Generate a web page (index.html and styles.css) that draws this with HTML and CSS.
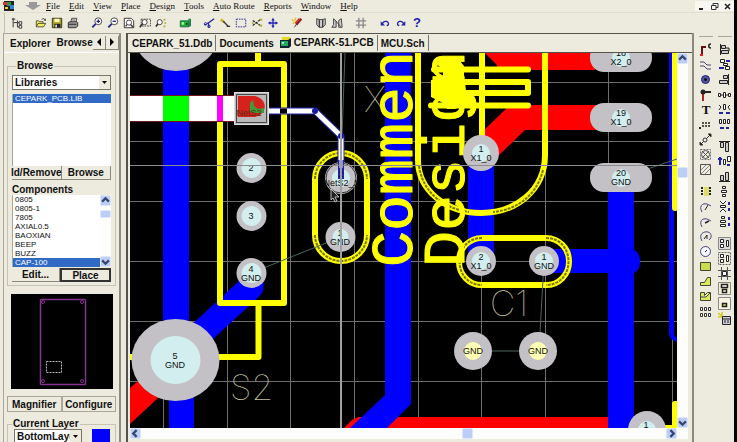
FILE: index.html
```html
<!DOCTYPE html>
<html lang="en">
<head>
    <meta charset="UTF-8">
    <meta name="viewport" content="width=device-width, initial-scale=1.0">
    <title>CEPARK-51.PCB</title>
    <link rel="stylesheet" href="styles.css">
</head>

<body>
    <div class="app">
        <header class="menu-bar">
            <svg class="app-icon" width="12" height="12" viewBox="0 0 12 12"><path fill="#222" d="M1 1h10v10H1z"/><path fill="#d33" d="M0 2h4v3H0z"/><path fill="#2a9a4a" d="M4 2h4v4H4z"/><path fill="#38c" d="M7 5h4v4H7z"/><path fill="#fc3" d="M2 7h3v2H2z"/></svg>
            <svg class="doc-icon" width="16" height="10" viewBox="0 0 16 10"><path fill="#999" d="M4 1h8v3h4L8 9 0 4h4z"/></svg>
            <nav class="menu">
                <a href="#"><u>F</u>ile</a>
                <a href="#"><u>E</u>dit</a>
                <a href="#"><u>V</u>iew</a>
                <a href="#"><u>P</u>lace</a>
                <a href="#"><u>D</u>esign</a>
                <a href="#"><u>T</u>ools</a>
                <a href="#"><u>A</u>uto Route</a>
                <a href="#"><u>R</u>eports</a>
                <a href="#"><u>W</u>indow</a>
                <a href="#"><u>H</u>elp</a>
            </nav>
            <div class="window-buttons">
                <button aria-label="Minimize"><svg width="9" height="9" viewBox="0 0 9 9"><path stroke="#222" stroke-width="2" d="M2 7h4"/></svg></button>
                <button aria-label="Restore"><svg width="9" height="9" viewBox="0 0 9 9"><path fill="none" stroke="#333" d="M3 3V1.500h5v4H6M1.500 3.500h4.500v4H1.500z"/></svg></button>
                <button aria-label="Close"><svg width="9" height="9" viewBox="0 0 9 9"><path stroke="#222" stroke-width="1.500" d="M2 2l5 5M7 2L2 7"/></svg></button>
            </div>
        </header>

        <div class="toolbar">
            <div class="tool-group">
                <button aria-label="Panel"><svg viewBox="0 0 14 14"><path fill="none" stroke="#222" d="M2.500 1v11M1 2.500h4M3 6.500h4M7.500 4v8M8 6.500h2M8 11.500h2"/><path fill="#fff" stroke="#222" d="M9.500 5.500h3v3h-3zM9.500 10h3v3h-3z"/></svg></button>
            </div>
            <div class="tool-group">
                <button aria-label="Open"><svg viewBox="0 0 14 14"><path fill="#f4ec60" stroke="#443" d="M1.500 11V4.500h3l1 1h4V7M1.500 11.500l2-4h9l-2.500 4z"/><path fill="none" stroke="#222" d="M8 3c1-2 3-1 4 1l-1-.2M12 4V2"/></svg></button>
                <button aria-label="Save"><svg viewBox="0 0 14 14"><path fill="#a8a020" stroke="#222" d="M1.500 1.500h11v11h-11z"/><path fill="#fff8b0" d="M4 2h6v4H4z"/><path fill="#222" d="M4 8h7v4H4z"/><path fill="#ddd" d="M5 9h2v3H5z"/></svg></button>
                <button aria-label="Print"><svg viewBox="0 0 14 14"><path fill="#fff" stroke="#333" d="M4.500 6l1-4.500h6L10.500 6"/><path fill="#999" stroke="#222" d="M1.500 6.500l2-1h8l1 1v4l-2 2h-9z"/><path stroke="#222" d="M2 8.500h9M6 3.500h4"/></svg></button>
            </div>
            <div class="tool-group">
                <button aria-label="Zoom in"><svg viewBox="0 0 14 14"><circle cx="8.500" cy="5" r="4" fill="#fff" stroke="#333"/><path stroke="#228" stroke-width="1.500" d="M6.500 5h4M8.500 3v4"/><path stroke="#228" stroke-width="2" d="M5.500 8L1.500 12"/></svg></button>
                <button aria-label="Zoom out"><svg viewBox="0 0 14 14"><circle cx="8.500" cy="5" r="4" fill="#fff" stroke="#333"/><path stroke="#228" stroke-width="1.500" d="M6.500 5h4"/><path stroke="#228" stroke-width="2" d="M5.500 8L1.500 12"/></svg></button>
                <button aria-label="Fit document"><svg viewBox="0 0 14 14"><path fill="#fff" stroke="#222" d="M1.500 1.500h8l3 3v8h-11z"/><circle cx="7" cy="6.500" r="3" fill="none" stroke="#333"/><path stroke="#333" stroke-width="1.500" d="M9 9l3 3M4.500 9L3 11"/></svg></button>
                <button aria-label="Zoom area"><svg viewBox="0 0 14 14"><path fill="none" stroke="#333" stroke-dasharray="2 1" d="M2.500 2.500h11v8h-11z"/><circle cx="6.500" cy="6" r="3" fill="#fff" stroke="#333"/><path stroke="#333" stroke-width="2" d="M4 8l-3 4"/></svg></button>
                <button aria-label="Zoom point"><svg viewBox="0 0 14 14"><circle cx="5.500" cy="6" r="3" fill="#fff" stroke="#333"/><path stroke="#333" stroke-width="2" d="M3.500 8L1 11"/><path fill="#aa2" d="M10 2h2v2h-2zM11 6h2v2h-2zM10 10h2v2h-2z"/></svg></button>
            </div>
            <div class="tool-group">
                <button aria-label="Board"><svg viewBox="0 0 14 14"><path fill="#22a83c" stroke="#164" d="M1.500 4.500h10v7h-10zM11 2.500h2.500v8H11"/><path fill="#9f8" d="M3 6h3v3H3z"/><path fill="#222" d="M8 7h2v2H8z"/></svg></button>
            </div>
            <div class="tool-group">
                <button aria-label="Cut"><svg viewBox="0 0 14 14"><path fill="none" stroke="#229" stroke-width="1.500" d="M13 2L5 8M7 12l-1-6M4 8.500L1.500 9"/><circle cx="3" cy="8" r="1.500" fill="none" stroke="#229"/><circle cx="7" cy="11" r="1.500" fill="none" stroke="#229"/></svg></button>
                <button aria-label="Paste"><svg viewBox="0 0 14 14"><path stroke="#c8b820" stroke-width="3" d="M2 3l4 3"/><path stroke="#333" stroke-width="1.500" d="M5 5l6 6M9 11h4"/></svg></button>
                <button aria-label="Select area"><svg viewBox="0 0 14 14"><path fill="none" stroke="#229" stroke-dasharray="2 1" d="M1.500 2.500h11v9h-11z"/></svg></button>
                <button aria-label="Deselect"><svg viewBox="0 0 14 14"><path fill="none" stroke="#333" stroke-width="1.500" stroke-dasharray="3 1" d="M2 4l9 6M2 10l9-7"/><path fill="#aa2" d="M10 2h3v2h-3zM10 9h3v2h-3zM1 6h2v2H1z"/></svg></button>
                <button aria-label="Move"><svg viewBox="0 0 14 14"><path stroke="#22b" stroke-width="1.500" d="M7 3v8M3 7h8"/><path fill="#22b" d="M7 1l2 3H5zM7 13l2-3H5zM1 7l3-2v4zM13 7l-3-2v4z"/></svg></button>
            </div>
            <div class="tool-group">
                <button aria-label="Wizard"><svg viewBox="0 0 14 14"><path stroke="#822" stroke-width="3" d="M12 2L6 9"/><path stroke="#e03020" stroke-width="2" d="M10 2L5 7"/><path stroke="#e0c020" stroke-width="1.500" d="M1 3l3 2M5 1v3M2 8l2-2"/><path stroke="#333" d="M6 9l-2 3"/></svg></button>
            </div>
            <div class="tool-group">
                <button aria-label="Library"><svg viewBox="0 0 14 14"><path fill="#ccc" stroke="#333" d="M2 2l3 1v9L2 9zM12 2L9 3v9l3-3zM5 3h4v9H5z"/></svg></button>
                <button aria-label="Browse library"><svg viewBox="0 0 14 14"><path fill="#ccc" stroke="#333" d="M3 2l3 3v7H1l2-3zM12 2L9 4v8h4zM5 4l6 7"/></svg></button>
            </div>
            <div class="tool-group">
                <button aria-label="Grid"><svg viewBox="0 0 14 14"><path stroke="#888" stroke-width="1.500" d="M4.500 1v12M9.500 1v12M1 4.500h12M1 9.500h12"/></svg></button>
            </div>
            <div class="tool-group">
                <button aria-label="Undo"><svg viewBox="0 0 14 14"><path fill="none" stroke="#22a" stroke-width="1.500" d="M4 8C5 4 12 4 11 9l-2 1"/><path fill="#22a" d="M2 5v5h5z"/></svg></button>
                <button aria-label="Redo"><svg viewBox="0 0 14 14"><path fill="none" stroke="#22a" stroke-width="1.500" d="M10 8C9 4 2 4 3 9l2 1"/><path fill="#22a" d="M12 5v5H7z"/></svg></button>
                <button aria-label="Help" class="help">?</button>
            </div>
        </div>

        <main class="workspace">
            <aside class="side-panel">
                <div class="panel-tabs">
                    <button class="panel-tab">Explorer</button>
                    <button class="panel-tab active">Browse</button>
                    <div class="tab-scroll">
                        <button aria-label="Previous tab"><svg width="6" height="8" viewBox="0 0 6 8"><path d="M5 0v8L1 4z"/></svg></button>
                        <button aria-label="Next tab"><svg width="6" height="8" viewBox="0 0 6 8"><path d="M1 0v8l4-4z"/></svg></button>
                    </div>
                </div>
                <div class="panel-body">
                    <fieldset class="group browse-group">
                        <legend>Browse</legend>
                        <div class="drop-down">
                            <select aria-label="Browse"><option>Libraries</option></select>
                            <svg width="5" height="3" viewBox="0 0 5 3"><path d="M0 0h5L2.500 3z"/></svg>
                        </div>
                        <ul class="list library-list">
                            <li class="selected">CEPARK_PCB.LIB</li>
                        </ul>
                        <div class="button-row">
                            <button>ld/Remove</button>
                            <button>Browse</button>
                        </div>
                        <h2>Components</h2>
                        <div class="component-box">
                            <ul class="list">
                                <li>0805</li>
                                <li>0805-1</li>
                                <li>7805</li>
                                <li>AXIAL0.5</li>
                                <li>BAOXIAN</li>
                                <li>BEEP</li>
                                <li>BUZZ</li>
                                <li class="selected">CAP-100</li>
                            </ul>
                            <div class="scroll-bar vertical">
                                <button aria-label="Up"><svg viewBox="0 0 8 8"><path d="M1 5l3-3 3 3"/></svg></button>
                                <span class="space-list"></span>
                                <span class="thumb"></span>
                                <span class="space-rest"></span>
                                <button aria-label="Down"><svg viewBox="0 0 8 8"><path d="M1 3l3 3 3-3"/></svg></button>
                            </div>
                        </div>
                        <div class="button-row">
                            <button>Edit...</button>
                            <button class="default">Place</button>
                        </div>
                    </fieldset>

                    <svg class="preview" viewBox="0 0 102 95">
                        <rect width="102" height="95" fill="#000"/>
                        <rect x="29.500" y="5.500" width="45" height="85" rx="1" fill="none" stroke="#84348c" stroke-width="1.500"/>
                        <g fill="none" stroke="#84348c"><circle cx="32" cy="8" r="1.500"/><circle cx="71" cy="8" r="1.500"/><circle cx="32" cy="87" r="1.500"/><circle cx="71" cy="87" r="1.500"/></g>
                        <rect x="35.500" y="67.500" width="15" height="11" fill="none" stroke="#bbb" stroke-dasharray="2 1"/>
                    </svg>

                    <div class="button-row wide">
                        <button>Magnifier</button>
                        <button>Configure</button>
                    </div>

                    <fieldset class="group layer-group">
                        <legend>Current Layer</legend>
                        <div class="layer-row">
                            <div class="drop-down">
                                <select aria-label="Current Layer"><option>BottomLayer</option></select>
                                <svg width="5" height="3" viewBox="0 0 5 3"><path d="M0 0h5L2.500 3z"/></svg>
                            </div>
                            <span class="layer-color"></span>
                        </div>
                    </fieldset>
                </div>
            </aside>

            <section class="document">
                <div class="doc-tabs">
                    <button>CEPARK_51.Ddb</button>
                    <button>Documents</button>
                    <button class="active"><svg width="12" height="11" viewBox="0 0 12 11"><path fill="#e8d820" d="M2 0h8v3H2z"/><path fill="#123" d="M0 3h8l3-2v8l-2 2H0z"/><path fill="#2a5" d="M1 4h7v5H1z"/><path fill="#8ef" d="M2 5h2v2H2z"/></svg>CEPARK-51.PCB</button>
                    <button>MCU.Sch</button>
                </div>
                <div class="canvas-row">
                    <svg class="board" viewBox="130 53 547 375" preserveAspectRatio="xMinYMin slice">
                        <rect x="130" y="53" width="547" height="375" fill="#000"/>

                        <!-- grid -->
                        <path class="grid" d="M163.500 53v375M227.500 53v375M290.500 53v375M354.500 53v375M418.500 53v375M481.500 53v375M545.500 53v375M608.500 53v375M672.500 53v375M130 82.500h547M130 141.500h547M130 201.500h547M130 261.500h547M130 321.500h547M130 381.500h547"/>

                        <!-- designators -->
                        <g class="designator">
                            <text x="230" y="400">S2</text>
                            <text x="490" y="316">C1</text>
                            <text x="364" y="112">X1</text>
                        </g>

                        <!-- top layer -->
                        <g fill="#f00">
                            <path d="M130 388l8-7 20 17-28 26z"/>
                            <path d="M485 53h110v17h-98v-5z"/>
                            <path d="M510 105h90v25h-75l-30 29-14-6v-20z"/>
                            <path d="M344 428l8-8 6-3h252v11z"/>
                        </g>

                        <!-- bottom layer -->
                        <g fill="#00f">
                            <path d="M163 53h26v300h-26zM169 380h25v48h-25z"/>
                            <path d="M385 53h26v351l-24 24h-37l35-33z"/>
                            <path d="M468 153h26v108h-26z"/>
                            <path d="M608 180h26v70c8 3 8 20 0 23v155h-26V273h-64v-24h64z"/>
                            <path d="M669 53h5v282l3 3v4l-6-3-2-5z"/>
                        </g>
                        <path d="M251 273v14l-76 70" fill="none" stroke="#00f" stroke-width="25" stroke-linecap="round" stroke-linejoin="round"/>

                        <!-- overlay -->
                        <g class="overlay">
                            <path d="M220 64h64v239h-64zM258 53v11M258.500 303v54H130"/>
                            <rect x="315" y="153" width="52" height="108" rx="26"/>
                            <path d="M418 53v107C418 190 446 213 481 213S545 190 545 155V53"/>
                            <rect x="459" y="238" width="110" height="47" rx="23"/>
                            <path d="M482 53v85M434 69.500h94M445 82h83v11h-80M431 105.500h97"/>
                            <path d="M675 53v155M677 404h-2v24M664 428h13"/>
                        </g>
                        <path d="M436 64l4-3h20l4 5v10l2 14 9 9-4 10-8-4-8 4h-8l-4-6-12-6V80h12V69z" fill="#ff0"/>
                        <g class="arc-lines">
                            <path d="M315 179c0-14 12-26 26-26s26 12 26 26M315 235c0 14 12 26 26 26s26-12 26-26M419 166c4 27 24 42 50 46M543 170c-6 25-26 40-50 42M546 238c30 0 30 47 0 47M482 238c-30 0-30 47 0 47"/>
                        </g>
                        <g class="comment">
                            <text transform="translate(412 267) rotate(-90)">Commen</text>
                            <text transform="translate(464 267) rotate(-90)">Design</text>
                        </g>

                        <!-- connections -->
                        <path d="M251 273l90-36M345 53l-4 110M544 261l-5 90M473 351h65M621 178l56-19" stroke="#4a6460" fill="none"/>

                        <!-- track being routed -->
                        <path d="M130 96h106v25H130z" fill="#fff"/>
                        <path d="M130 95.500h104M130 121.500h104" stroke="#701818"/>
                        <path d="M163 96h26v25h-26z" fill="#0f0"/>
                        <path d="M217 96h6v25h-6z" fill="#f0f"/>
                        <g fill="none" stroke-linejoin="round">
                            <path d="M262 111h53l26 25v44" stroke="#22a" stroke-width="7"/>
                            <path d="M262 111h53l26 25v30" stroke="#fff" stroke-width="5"/>
                            <path d="M280 111h7" stroke="#000" stroke-width="5"/>
                        </g>

                        <!-- pads -->
                        <g fill="#c4c1c6">
                            <ellipse cx="176" cy="30" rx="44" ry="41"/>
                            <ellipse cx="175.500" cy="360" rx="44" ry="41"/>
                            <circle cx="251.500" cy="168" r="15"/>
                            <circle cx="251.500" cy="216" r="15"/>
                            <circle cx="251.500" cy="273" r="15"/>
                            <circle cx="341" cy="178" r="16"/>
                            <circle cx="340.500" cy="237" r="15"/>
                            <circle cx="481" cy="153" r="18"/>
                            <circle cx="481" cy="261" r="15"/>
                            <circle cx="544" cy="261" r="15"/>
                            <circle cx="473" cy="351" r="19"/>
                            <circle cx="538" cy="351" r="19"/>
                            <circle cx="647" cy="430" r="19"/>
                            <rect x="590" y="43" width="62" height="29" rx="14"/>
                            <rect x="590" y="103" width="62" height="29" rx="14"/>
                            <rect x="590" y="163" width="62" height="29" rx="14"/>
                        </g>
                        <g fill="#d2eeee">
                            <ellipse cx="175.500" cy="360" rx="25" ry="24"/>
                            <circle cx="251.500" cy="168" r="10"/>
                            <circle cx="251.500" cy="216" r="10"/>
                            <circle cx="251.500" cy="273" r="10"/>
                            <circle cx="341" cy="178" r="9"/>
                            <circle cx="340.500" cy="237" r="8"/>
                            <circle cx="481" cy="153" r="9"/>
                            <circle cx="481" cy="261" r="9"/>
                            <circle cx="544" cy="261" r="9"/>
                            <circle cx="647" cy="430" r="9"/>
                            <circle cx="621" cy="58" r="9"/>
                            <circle cx="621" cy="118" r="9"/>
                            <circle cx="621" cy="178" r="9"/>
                        </g>
                        <g fill="#ffffb4">
                            <circle cx="473" cy="351" r="9"/>
                            <circle cx="538" cy="351" r="9"/>
                        </g>
                        <circle cx="341" cy="178" r="15" fill="none" stroke="#333"/>
                        <path d="M341 160v19" stroke="#2222b0" stroke-width="6"/>
                        <path d="M341 160v8" stroke="#fff" stroke-width="3"/>
                        <circle cx="315" cy="111" r="3" fill="#1a1aa0"/>
                        <circle cx="341" cy="136" r="3" fill="#1a1aa0"/>

                        <rect x="234.500" y="92.500" width="34" height="32" fill="#b9b9b9" stroke="#ddd"/>
                        <path d="M236.500 123V94.500h30V122.500h-30" fill="none" stroke="#444"/>
                        <path d="M238 96h17c13 3 13 18 0 21h-17z" fill="#d6221c"/>
                        <path d="M250 103l3-3 1 6 4 3 6-1v5h-8l-6-1z" fill="#3f9a3a"/>

                        <g class="pad-label">
                            <text x="249" y="116" class="net-red">NetS2</text>
                            <text x="251" y="171">2</text>
                            <text x="251" y="219">3</text>
                            <text x="251" y="272">4</text>
                            <text x="251" y="281">GND</text>
                            <text x="175" y="359">5</text>
                            <text x="175" y="368">GND</text>
                            <text x="341" y="177">2</text>
                            <text x="341" y="186">NetS2_1</text>
                            <text x="340" y="236">1</text>
                            <text x="340" y="245">GND</text>
                            <text x="481" y="152">1</text>
                            <text x="481" y="161">X1_0</text>
                            <text x="481" y="260">2</text>
                            <text x="481" y="269">X1_0</text>
                            <text x="544" y="260">1</text>
                            <text x="544" y="269">GND</text>
                            <text x="473" y="354">GND</text>
                            <text x="538" y="354">GND</text>
                            <text x="621" y="56">18</text>
                            <text x="621" y="65">X2_0</text>
                            <text x="621" y="116">19</text>
                            <text x="621" y="125">X1_0</text>
                            <text x="621" y="176">20</text>
                            <text x="621" y="185">GND</text>
                            <text x="646" y="428">1</text>
                        </g>

                        <!-- cross hair and pointer -->
                        <path d="M130 165.500h547" stroke="#8c8c8c"/>
                        <path d="M341 53v375" stroke="#a0a0a0" stroke-width="2"/>
                        <path d="M331 189v11l2-2 2 4 2-1-2-4h4z" fill="#222" stroke="#bbb"/>
                    </svg>
                    <div class="scroll-bar vertical">
                        <button aria-label="Scroll up"><svg viewBox="0 0 8 8"><path d="M1 5l3-3 3 3"/></svg></button>
                        <span class="space-3"></span>
                        <span class="thumb"></span>
                        <span class="space-7"></span>
                        <button aria-label="Scroll down"><svg viewBox="0 0 8 8"><path d="M1 3l3 3 3-3"/></svg></button>
                    </div>
                </div>
                <div class="scroll-bar horizontal">
                    <button aria-label="Scroll left"><svg viewBox="0 0 8 8"><path d="M5 1L2 4l3 3"/></svg></button>
                    <span class="space-5"></span>
                    <span class="thumb"></span>
                    <span class="space-3"></span>
                    <button aria-label="Scroll right"><svg viewBox="0 0 8 8"><path d="M3 1l3 3-3 3"/></svg></button>
                </div>
            </section>

            <aside class="palettes">
                <div class="palette">
                    <div class="palette-group">
                        <button aria-label="Route"><svg viewBox="0 0 13 13"><path fill="none" stroke="#611" stroke-width="2" d="M3 12V4h4"/><path fill="#d22" d="M1 11h3v2H1z"/><path fill="none" stroke="#222" stroke-width="1.500" d="M12 1c-3 0-3 4 0 4"/></svg></button>
                        <button aria-label="Line"><svg viewBox="0 0 13 13"><path fill="none" stroke="#447" d="M1 4h4l3 3h4M1 8h4l3 3h4"/></svg></button>
                        <button aria-label="Pad"><svg viewBox="0 0 13 13"><circle cx="6.500" cy="6.500" r="4" fill="#55a" stroke="#226"/><circle cx="6.500" cy="6.500" r="1.500" fill="#111"/></svg></button>
                        <button aria-label="Via"><svg viewBox="0 0 13 13"><path stroke="#222" stroke-width="2" d="M4 4h8"/><path stroke="#a22" stroke-width="2" d="M4 5v8"/><circle cx="4" cy="4" r="2.500" fill="#222"/></svg></button>
                        <button aria-label="Text" class="text-tool">T</button>
                        <button aria-label="Coordinate"><svg viewBox="0 0 13 13"><path fill="none" stroke="#222" stroke-width="1.500" stroke-dasharray="2 1" d="M3 5h9M3 8h9"/><path fill="#222" d="M0 9h2v2H0z"/></svg></button>
                        <button aria-label="Dimension"><svg viewBox="0 0 13 13"><path stroke="#333" d="M1 12L12 1M1 9v3h3M9 1h3v3"/><circle cx="6" cy="7" r="2" fill="#eee" stroke="#333"/></svg></button>
                        <button aria-label="Origin"><svg viewBox="0 0 13 13"><path fill="none" stroke="#777" stroke-dasharray="2 1" d="M1.500 1.500h10v10h-10z"/><circle cx="6.500" cy="6.500" r="4" fill="none" stroke="#555"/><path stroke="#555" d="M3 3l7 7M10 3l-7 7"/></svg></button>
                        <button aria-label="Room"><svg viewBox="0 0 13 13"><path fill="none" stroke="#555" d="M1.500 1.500h10v10h-10z"/><path stroke="#888" d="M2 7l5-5M2 11l9-9M6 11l5-5"/></svg></button>
                    </div>
                    <div class="palette-group">
                        <button aria-label="Component"><svg viewBox="0 0 13 13"><path fill="#dd6" d="M5 2h5v9H5z"/><path stroke="#222" stroke-width="2" stroke-dasharray="2 1" d="M3 2v9M11 2v9"/></svg></button>
                        <button aria-label="Arc by edge"><svg viewBox="0 0 13 13"><path fill="none" stroke="#448" d="M3 12C-1 5 5 1 12 6"/><path stroke="#222" d="M6 10l3-5"/></svg></button>
                        <button aria-label="Arc by center"><svg viewBox="0 0 13 13"><path fill="none" stroke="#448" d="M3 12C-1 5 5 1 12 6"/><path stroke="#222" stroke-width="1.500" d="M6 8l4-2"/></svg></button>
                        <button aria-label="Arc any angle"><svg viewBox="0 0 13 13"><path fill="none" stroke="#448" d="M3 11C-1 4 5 1 9 2s4 6 1 8"/><path fill="none" stroke="#222" d="M5 9l3-4v4"/></svg></button>
                        <button aria-label="Circle"><svg viewBox="0 0 13 13"><circle cx="6.500" cy="6.500" r="5" fill="#f6f6ff" stroke="#448"/><path stroke="#222" d="M6 7l2-2"/></svg></button>
                        <button aria-label="Fill"><svg viewBox="0 0 13 13"><path fill="#c8dc50" stroke="#443" d="M1.500 2.500h10v8h-10z"/></svg></button>
                        <button aria-label="Polygon plane"><svg viewBox="0 0 13 13"><path fill="#dce860" stroke="#443" d="M1.500 7.500h4l3-5h3v8h-10z"/></svg></button>
                        <button aria-label="Split plane"><svg viewBox="0 0 13 13"><path fill="#dce860" stroke="#443" d="M1.500 2.500h4v3l3-3h3v8h-10zM2 7h5l4-4"/></svg></button>
                        <button aria-label="Array"><svg viewBox="0 0 13 13"><path fill="#fff" stroke="#333" d="M1.500 2.500h2v3h-2zM5.500 2.500h2v3h-2zM9.500 2.500h2v3h-2zM1.500 8.500h2v3h-2zM5.500 8.500h2v3h-2zM9.500 8.500h2v3h-2z"/></svg></button>
                    </div>
                </div>
                <div class="palette">
                    <div class="palette-group">
                        <button aria-label="Align left"><svg viewBox="0 0 13 13"><path fill="#ccc" stroke="#222" d="M2.500 1v11M3.500 2.500h4v3h-4zM3.500 7.500h7v3h-7zM8 5h3v3"/></svg></button>
                        <button aria-label="Center horizontally"><svg viewBox="0 0 13 13"><path fill="#fff" stroke="#222" d="M2.500 1.500h4v3h-4zM5.500 5.500h4v2h-4zM7.500 8.500h4v3h-4z"/><path stroke="#22a" stroke-width="2" d="M8 3h4M1 10h5"/></svg></button>
                        <button aria-label="Align right"><svg viewBox="0 0 13 13"><path fill="#ccc" stroke="#222" d="M10.500 1v11M5.500 2.500h4v3h-4zM1.500 7.500h8v3h-8z"/></svg></button>
                        <button aria-label="Space equally"><svg viewBox="0 0 13 13"><path fill="#fff" stroke="#222" d="M.500 5.500h2v3h-2zM5.500 4.500h2v5h-2zM10.500 5.500h2v3h-2zM3 7h2M8 7h2"/></svg></button>
                        <button aria-label="Increase spacing"><svg viewBox="0 0 13 13"><path fill="#fff" stroke="#222" d="M1 2l2 2-2 3M5.500 1.500h2v5h-2zM12 2l-2 2 2 3"/><path stroke="#22a" stroke-width="2" d="M1 10h4M8 10h4"/></svg></button>
                        <button aria-label="Decrease spacing"><svg viewBox="0 0 13 13"><path fill="#fff" stroke="#222" d="M1.500 1.500h2v4h-2zM5.500 1.500h2v4h-2zM9.500 1.500h2v4h-2z"/><path stroke="#22a" stroke-width="2" d="M2 10h4M8 10h3"/></svg></button>
                    </div>
                    <div class="palette-group">
                        <button aria-label="Align top"><svg viewBox="0 0 13 13"><path fill="#ccc" stroke="#222" d="M1 1.500h11M2.500 2.500h3v5h-3zM7.500 2.500h3v9h-3z"/></svg></button>
                        <button aria-label="Center vertically"><svg viewBox="0 0 13 13"><path fill="#fff" stroke="#222" d="M5.500 4.500h2v5h-2zM9.500 1.500h3v5h-3z"/><path stroke="#22a" stroke-width="2" d="M2 2v8M0 4h4M9 10h3"/></svg></button>
                        <button aria-label="Align bottom"><svg viewBox="0 0 13 13"><path fill="#ccc" stroke="#222" d="M1 11.500h11M2.500 5.500h3v5h-3zM7.500 2.500h3v8h-3z"/></svg></button>
                        <button aria-label="Space vertically"><svg viewBox="0 0 13 13"><path fill="#fff" stroke="#222" d="M4.500 1.500h3v2h-3zM3.500 5.500h5v2h-5zM4.500 9.500h3v2h-3z"/></svg></button>
                        <button aria-label="Increase vertical"><svg viewBox="0 0 13 13"><path fill="#fff" stroke="#222" d="M2 1l3 3 3-3M2.500 5.500h5v2h-5zM2 12l3-3 3 3"/><path stroke="#22a" stroke-width="2" d="M11 2v3M11 8v3"/></svg></button>
                        <button aria-label="Decrease vertical"><svg viewBox="0 0 13 13"><path fill="#fff" stroke="#222" d="M3.500 1.500h3v2h-3zM2.500 5.500h5v2h-5zM2.500 9.500h5v2h-5z"/><path stroke="#22a" stroke-width="2" d="M11 2v3M11 8v3"/></svg></button>
                    </div>
                    <div class="palette-group">
                        <button aria-label="Arrange in room"><svg viewBox="0 0 13 13"><path fill="#ddd" stroke="#888" d="M.500.500h12v12H.500z"/><path fill="#fff" stroke="#222" d="M2.500 2.500h3v3h-3zM2.500 7.500h3v3h-3zM8.500 3.500h2v6h-2z"/></svg></button>
                        <button aria-label="Arrange in rectangle"><svg viewBox="0 0 13 13"><path fill="none" stroke="#666" stroke-dasharray="2 1" d="M.500.500h12v12H.500z"/><path fill="#fff" stroke="#222" d="M2.500 2.500h3v3h-3zM2.500 7.500h3v3h-3zM8.500 3.500h2v6h-2z"/></svg></button>
                        <button aria-label="Move to grid"><svg viewBox="0 0 13 13"><path stroke="#555" d="M3.500 0v13M9.500 0v13M0 3.500h13M0 9.500h13"/><path fill="#fff" stroke="#222" d="M4.500 4.500h4v4h-4z"/></svg></button>
                        <button aria-label="Make union"><svg viewBox="0 0 13 13"><path fill="#f4f0d0" stroke="#888" d="M.500.500h12v12H.500z"/><path fill="#fff" stroke="#222" stroke-width="1.500" d="M3.500 2.500h6v3h-6zM4.500 7.500h4v3h-4z"/></svg></button>
                        <button aria-label="Break union"><svg viewBox="0 0 13 13"><path fill="#f8f4e0" stroke="#888" d="M.500.500h12v12H.500z"/><path fill="#dd6" stroke="#222" stroke-width="1.500" d="M4.500 6.500h4v3h-4z"/></svg></button>
                        <button aria-label="Placement options"><svg viewBox="0 0 13 13"><path stroke="#cc2" stroke-width="1.500" d="M0 1l5 4M4 0v5M0 5h4"/><path fill="#ccd" stroke="#222" d="M4.500 4.500h8v8h-8zM5 7h7M7 8v3M10 8v3"/></svg></button>
                    </div>
                </div>
            </aside>
        </main>
    </div>
</body>
</html>
```
FILE: styles.css
```css
* {
    box-sizing: border-box;
}

body {
    margin: 0;
    height: 100vh;
    overflow: hidden;
    background: #000;
    font-family: "Liberation Sans", Arial, sans-serif;
    font-size: 10px;
    font-weight: bold;
    color: #111;
}

button {
    margin: 0;
    padding: 0;
    border: none;
    background: none;
    color: inherit;
    font: inherit;
}

.app {
    display: flex;
    flex-direction: column;
    height: 100%;
    margin-right: 3px;
    background: #edeade;
}

/* menu and toolbar */
.menu-bar {
    display: flex;
    align-items: center;
    flex: none;
    height: 13px;
    border-bottom: 1px solid #e2dfd2;
}

.app-icon {
    margin-left: 3px;
}

.doc-icon {
    margin-left: 10px;
}

.menu {
    display: flex;
    gap: 9px;
    flex: 1;
    margin-left: 5px;
    font-family: "Liberation Serif", serif;
    font-size: 9px;
    font-weight: normal;
}

.menu a {
    color: #111;
    text-decoration: none;
    white-space: nowrap;
}

.window-buttons {
    display: flex;
    gap: 4px;
    padding: 0 2px;
    background: #f8f7f2;
}

.window-buttons button {
    height: 10px;
}

.window-buttons svg {
    display: block;
}

.toolbar {
    display: flex;
    align-items: center;
    gap: 8px;
    flex: none;
    height: 20px;
    margin-left: 4px;
    padding-left: 4px;
    border-left: 1px solid #c5c2b5;
}

.tool-group {
    display: flex;
}

.tool-group button {
    width: 16px;
    height: 16px;
}

.tool-group svg {
    display: block;
    width: 12px;
    height: 12px;
    margin: 2px;
}

.tool-group .help {
    color: #2020b0;
    font-size: 13px;
    line-height: 16px;
}

.workspace {
    display: flex;
    flex: 1;
    min-height: 0;
}

/* left panel */
.side-panel {
    display: flex;
    flex-direction: column;
    flex: none;
    width: 118px;
    margin-left: 3px;
    border: 1px solid #aaa79a;
    border-right: 2px solid #8c897e;
    border-bottom: none;
}

.panel-tabs {
    display: flex;
    align-items: center;
    flex: none;
    height: 18px;
}

.panel-tab {
    height: 18px;
    padding-left: 6px;
    text-align: left;
    white-space: nowrap;
}

.panel-tab.active {
    padding-bottom: 2px;
}

.tab-scroll {
    display: flex;
    flex: 1;
}

.tab-scroll button {
    flex: 1;
    height: 14px;
    border-right: 1px solid #8c897e;
    border-bottom: 1px solid #8c897e;
}

.panel-body {
    display: flex;
    flex-direction: column;
    padding: 8px 3px 0;
    border-top: 1px solid #fff;
}

.group {
    min-width: 0;
    margin: 0;
    padding: 0 4px 3px;
    border: 1px solid #c6c3b6;
}

.group legend {
    height: 10px;
    margin-left: 4px;
    padding: 0 1px;
    line-height: 10px;
}

.layer-group legend {
    margin-left: 0;
}

.drop-down {
    position: relative;
    border: 1px solid #77756c;
    background: #fff;
}

.drop-down select {
    display: block;
    width: 100%;
    height: 13px;
    padding: 0 11px 0 2px;
    border: none;
    background: none;
    appearance: none;
    color: #111;
    font: inherit;
}

.drop-down svg {
    position: absolute;
    top: 0;
    right: 0;
    width: 11px;
    height: 13px;
    padding: 5px 3px;
    background: #edeade;
}

.browse-group .drop-down {
    margin-top: 4px;
}

.list {
    flex: 1;
    margin: 0;
    padding: 0;
    list-style: none;
    background: #fff;
    font-size: 8px;
    font-weight: normal;
    line-height: 9px;
}

.list li {
    padding-left: 2px;
}

.list .selected {
    background: #316ac5;
    color: #fff;
}

.library-list {
    height: 72px;
    margin-top: 4px;
    border-left: 1px solid #aaa79a;
}

.button-row {
    display: flex;
}

.button-row button {
    display: flex;
    justify-content: center;
    align-items: center;
    flex: 1 1 0;
    min-width: 0;
    height: 14px;
    border-right: 1px solid #8c897e;
    border-bottom: 1px solid #8c897e;
}

.button-row .default {
    border: 2px solid #333;
}

.button-row.wide button {
    height: 16px;
    border: 1px solid #aaa79a;
}

.browse-group h2 {
    margin: 4px 0 0;
    font-size: 10px;
    line-height: 11px;
}

.component-box {
    display: flex;
    margin-bottom: 1px;
    border-left: 1px solid #aaa79a;
    background: #fff;
}

.preview {
    display: block;
    margin: 8px 3px 7px 4px;
}

.wide {
    margin-bottom: 7px;
}

.layer-row {
    display: flex;
    align-items: flex-start;
    gap: 10px;
}

.layer-row .drop-down {
    flex: none;
    width: 68px;
    margin-left: 2px;
}

.layer-color {
    width: 18px;
    height: 14px;
    background: #00f;
}

/* scroll bars */
.scroll-bar {
    display: flex;
    flex: none;
    background: #fdfdfb;
}

.scroll-bar.vertical {
    flex-direction: column;
    width: 11px;
}

.scroll-bar.horizontal {
    height: 11px;
    padding-right: 11px;
}

.scroll-bar button,
.thumb {
    flex: none;
    width: 11px;
    height: 11px;
    border: 1px solid #dce6fc;
    border-radius: 2px;
    background: #bccdf6;
}

.component-box .thumb {
    height: 8px;
}

.scroll-bar svg {
    display: block;
    width: 9px;
    height: 9px;
    fill: none;
    stroke: #33456e;
    stroke-width: 2px;
}

.space-list {
    flex: 1;
}

.space-rest {
    flex: 9;
}

.space-3 {
    flex: 3;
}

.space-5 {
    flex: 5;
}

.space-7 {
    flex: 7;
}

/* document */
.document {
    display: flex;
    flex-direction: column;
    flex: 1;
    min-width: 0;
    margin-left: 5px;
    padding-bottom: 3px;
    border-top: 1px solid #55534c;
    border-left: 2px solid #55534c;
}

.doc-tabs {
    display: flex;
    flex: none;
    height: 19px;
    padding-left: 1px;
    border-bottom: 1px solid #55534c;
}

.doc-tabs button {
    display: flex;
    align-items: center;
    gap: 2px;
    height: 16px;
    margin-top: 1px;
    padding: 0 3px;
    border-right: 1px solid #77756c;
}

.doc-tabs button:nth-child(2) {
    border-right: none;
}

.doc-tabs .active {
    padding-bottom: 2px;
}

.canvas-row {
    display: flex;
    flex: 1;
    min-height: 0;
    margin-right: 4px;
    padding-left: 2px;
}

.document .horizontal {
    margin: 0 4px 0 2px;
}

.board {
    display: block;
    flex: 1;
    min-width: 0;
    height: 100%;
}

.grid {
    stroke: #6e6e6e;
}

.designator {
    fill: #c4c4a0;
    font-family: Inter, sans-serif;
    font-size: 35px;
    font-weight: 100;
}

.overlay {
    fill: none;
    stroke: #ff0;
    stroke-width: 6px;
    stroke-linecap: round;
    stroke-linejoin: round;
}

.arc-lines {
    fill: none;
    stroke: #77770c;
    stroke-width: 2px;
    stroke-dasharray: 3 1;
}

.comment {
    fill: #ff0;
    stroke: #ff0;
    stroke-width: 1px;
    stroke-linejoin: round;
    font-family: "Liberation Mono", monospace;
    font-size: 60px;
    font-weight: normal;
}

.pad-label {
    fill: #111;
    font-size: 9px;
    font-weight: normal;
    text-anchor: middle;
}

.pad-label .net-red {
    fill: #5a2a10;
}

/* right palettes */
.palettes {
    display: flex;
    gap: 5px;
    flex: none;
    width: 42px;
    padding: 3px 4px 0 5px;
    border-left: 2px solid #8c897e;
}

.palette {
    display: flex;
    flex-direction: column;
    gap: 7px;
    width: 14px;
    padding-top: 5px;
    border-top: 1px solid #aaa79a;
}

.palette-group {
    display: flex;
    flex-direction: column;
}

.palette button {
    width: 14px;
    height: 15px;
}

.palette svg {
    display: block;
    width: 13px;
    height: 13px;
    margin: 1px 0;
}

.palette .text-tool {
    font-family: "Liberation Serif", serif;
    font-size: 13px;
    line-height: 15px;
}
```
